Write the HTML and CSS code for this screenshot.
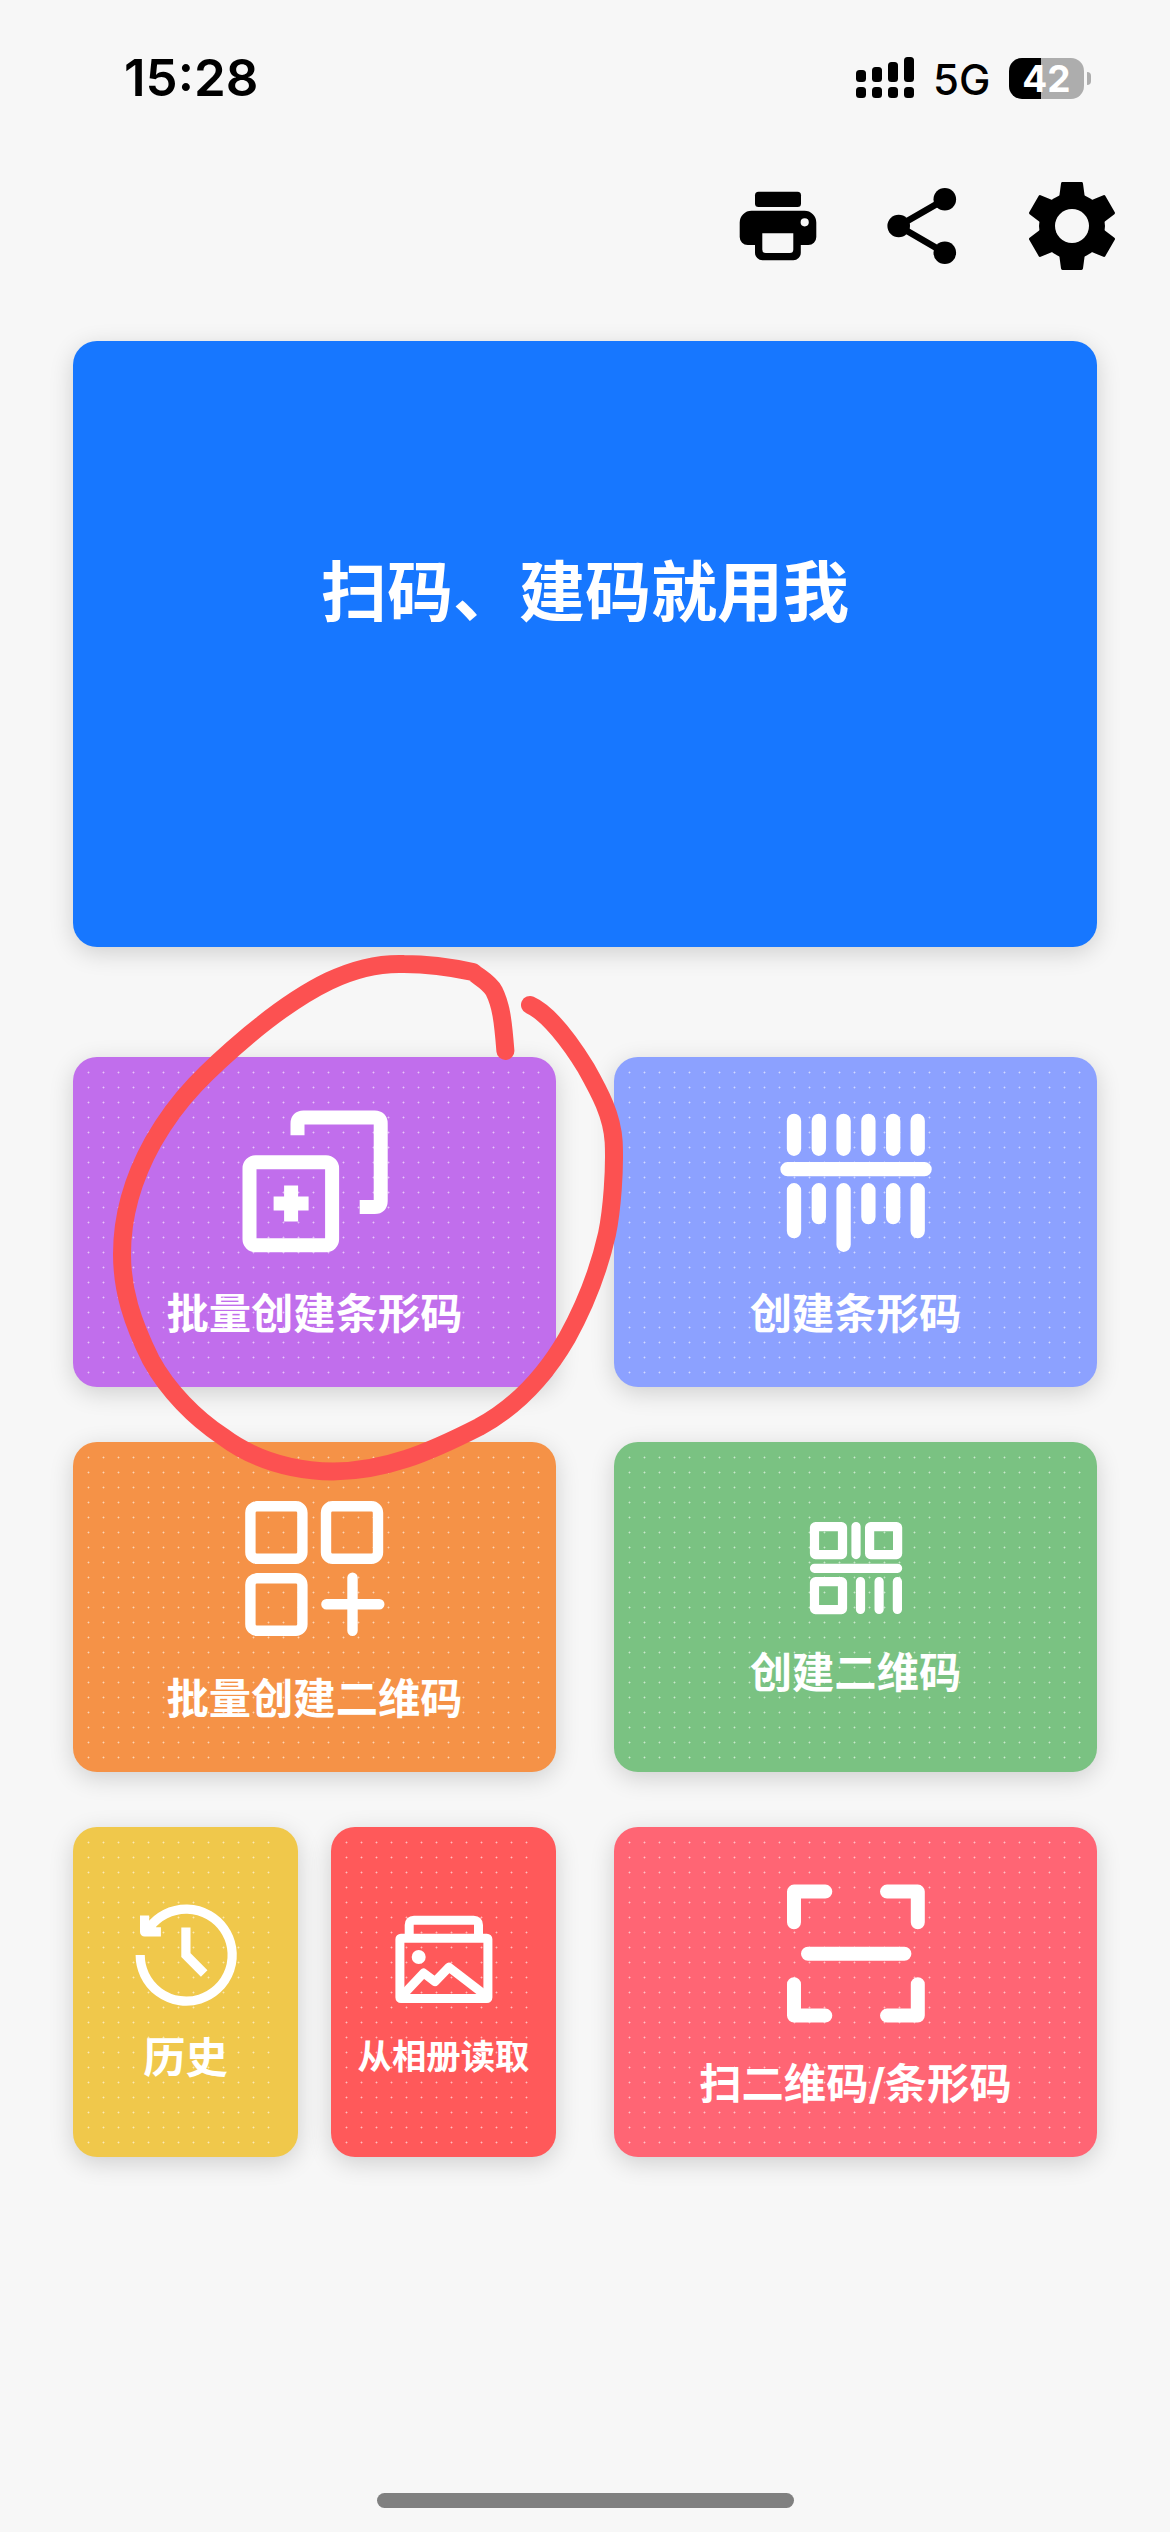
FILE: index.html
```html
<!DOCTYPE html>
<html lang="zh-CN">
<head>
<meta charset="utf-8">
<title>扫码、建码就用我</title>
<link rel="stylesheet" href="styles.css">
</head>
<body>
<div class="screen">
  <header class="status">
    <span class="status-time">15:28</span>
    <div class="status-right">
      <svg class="signal" width="58" height="42" viewBox="0 0 58 42">
        <rect x="0" y="13" width="10" height="12" rx="3.5"/><rect x="16" y="10" width="10" height="15" rx="3.5"/><rect x="32" y="5" width="10" height="20" rx="3.5"/><rect x="48" y="0" width="10" height="25" rx="3.5"/>
        <rect x="0" y="30" width="10" height="11" rx="3.5"/><rect x="16" y="30" width="10" height="11" rx="3.5"/><rect x="32" y="30" width="10" height="11" rx="3.5"/><rect x="48" y="30" width="10" height="11" rx="3.5"/>
      </svg>
      <span class="network">5G</span>
      <div class="battery"><span class="battery-level">42</span></div>
      <span class="battery-cap"></span>
    </div>
  </header>

  <nav class="toolbar">
    <svg width="90" height="90" viewBox="0 0 90 90">
      <rect x="22" y="10.7" width="46" height="15.2" rx="3.5"/>
      <path fill-rule="evenodd" d="M18.500 29.700H71.500A11.800 11.800 0 0 1 83.300 41.500V56A8 8 0 0 1 75.300 64H67.800V71.800A7.500 7.500 0 0 1 60.300 79.300H29.500A7.500 7.500 0 0 1 22 71.800V64H14.700A8 8 0 0 1 6.700 56V41.500A11.800 11.800 0 0 1 18.500 29.700ZM29.300 52.300V68.500Q29.300 72 32.800 72H56.800Q60.300 72 60.300 68.500V52.300ZM71.700 37.200A4.100 4.100 0 1 0 71.700 45.400A4.100 4.100 0 1 0 71.700 37.200Z"/>
    </svg>
    <svg class="share" width="90" height="90" viewBox="0 0 90 90">
      <circle cx="21.700" cy="45" r="11.300"/><circle cx="67.800" cy="18.300" r="11.300"/><circle cx="67.800" cy="71.800" r="11.300"/>
      <path d="M67.800 18.300L21.700 45L67.800 71.800" fill="none" stroke="#000" stroke-width="6.600"/>
    </svg>
    <svg class="gear" width="90" height="90" viewBox="0 0 90 90">
      <g stroke="#000" stroke-width="3" stroke-linejoin="round">
        <path id="tooth" d="M33.600 17L35.500 2.600H54.500L56.400 17V73L54.500 87.400H35.500L33.600 73Z"/>
        <use href="#tooth" transform="rotate(60 45 45)"/><use href="#tooth" transform="rotate(120 45 45)"/>
      </g>
      <circle cx="45" cy="45" r="33"/><circle cx="45" cy="45" r="17" fill="#f7f7f7"/>
    </svg>
  </nav>

  <main class="content">
    <section class="banner">扫码、建码就用我</section>

    <section class="grid">
      <a class="card purple">
        <svg class="icon" width="150" height="150" viewBox="0 0 150 150" stroke-width="14">
          <path d="M57.500 28.300V16.500Q57.500 10.500 63.500 10.500H134.700Q140.700 10.500 140.700 16.500V94Q140.700 100 134.700 100H119.700"/>
          <rect x="9.500" y="55.300" width="82.600" height="83" rx="6"/>
          <path d="M51.100 78.600V114.500M33.600 96.500H68.600"/>
        </svg>
        <span class="label">批量创建条形码</span>
      </a>
      <a class="card indigo">
        <svg class="icon round" width="160" height="150" viewBox="0 0 160 150" stroke-width="14.300">
          <path d="M18 13.900V41.800M42.800 13.900V41.800M67.600 13.900V41.800M92.400 13.900V41.800M117.200 13.900V41.800M141.700 13.900V41.800M11.500 62.200H148.600M18 83.200V124.100M42.800 83.200V110.100M67.600 83.200V137.800M92.400 83.200V110.100M117.200 83.200V110.100M141.700 83.200V124.100"/>
        </svg>
        <span class="label">创建条形码</span>
      </a>
      <a class="card orange">
        <svg class="icon round" width="150" height="150" viewBox="0 0 150 150" stroke-width="10.400">
          <rect x="10.400" y="14.300" width="52" height="52.500" rx="6.500"/><rect x="86" y="14.300" width="52" height="52.500" rx="6.500"/><rect x="10.400" y="86.300" width="52" height="52.500" rx="6.500"/>
          <path d="M112.500 85.700V138.800M86.400 112.300H139.300"/>
        </svg>
        <span class="label">批量创建二维码</span>
      </a>
      <a class="card green">
        <svg class="icon round" width="100" height="100" viewBox="0 0 100 100" stroke-width="9.200">
          <rect x="8.500" y="8.600" width="28" height="28" rx="1"/><rect x="63.600" y="8.600" width="28" height="28" rx="1"/><rect x="8.500" y="63.600" width="28" height="28" rx="1"/>
          <path d="M50 8.600V36.600M8.500 50.300H91.600M54.500 63.600V91.400M73.100 63.600V91.400M91.400 63.600V91.400"/>
        </svg>
        <span class="label">创建二维码</span>
      </a>
      <div class="pair">
        <a class="card small yellow">
          <svg class="icon" width="110" height="110" viewBox="0 0 110 110" stroke-width="9.200">
            <path d="M9.200 55A46 46 0 1 0 18.800 27"/>
            <path d="M13.600 15.500V31.900H29.900" stroke-linejoin="round"/>
            <path d="M17 29L22 24"/>
            <path d="M54.900 27.500V55L73.200 73.500"/>
          </svg>
          <span class="label">历史</span>
        </a>
        <a class="card small red">
          <svg class="icon" width="100" height="100" viewBox="0 0 100 100" stroke-width="9" stroke-linejoin="round">
            <rect x="5.900" y="30.200" width="88" height="60.300" rx="1"/>
            <path d="M15.200 28V17Q15.200 12.200 20 12.200H79.700Q84.500 12.200 84.500 17V28"/>
            <path d="M7.500 88.500L29.600 65L41 73.600L55 59.200L93 88.500"/>
            <circle cx="24.700" cy="49" r="7" fill="#fff" stroke="none"/>
          </svg>
          <span class="label label-sm">从相册读取</span>
        </a>
      </div>
      <a class="card pink">
        <svg class="icon round" width="150" height="150" viewBox="0 0 150 150" stroke-width="14">
          <path d="M13 45.300V14.600H44.300M106 14.600H136.800V45.300M13 107.300V138.600H44.300M106 138.600H136.800V107.300M27 76.700H123.400"/>
        </svg>
        <span class="label">扫二维码/条形码</span>
      </a>
    </section>
  </main>

  <div class="home-indicator"></div>

  <svg class="marker" width="1170" height="2532" viewBox="0 0 1170 2532">
    <path d="M505.400 1051C503 1020 501 1005 494 991C489 982 480 978 473 972C450 967 425 964 404 964C375 963 350 971 329 981C300 995 273 1015 249 1035C230 1051 212 1067 195 1085C177 1104 165 1121 153 1142C138 1169 122 1208 122 1254C122 1290 132 1322 151 1360C168 1391 195 1418 222 1436C258 1463 298 1471 333 1471.600C385 1471 428 1453 479 1427C516 1407 545 1376 567 1338C588 1300 600 1265 607 1234C612 1210 615 1170 613.700 1142C612 1115 600 1093 586 1068C570 1042 548 1013 530 1005"/>
  </svg>
</div>
</body>
</html>
```
FILE: styles.css
```css
* { box-sizing: border-box; }
body {
  margin: 0;
  background: #f7f7f7;
  font-family: Inter, "Noto Sans CJK SC", sans-serif;
  color: #000;
}
.screen {
  position: relative;
  width: 1170px;
  height: 2532px;
  display: flex;
  flex-direction: column;
  overflow: hidden;
}
svg { display: block; flex: none; }

.status {
  height: 156px;
  padding: 0 79px 0 124px;
  display: flex;
  align-items: center;
  justify-content: space-between;
}
.status-time { font-size: 51px; font-weight: 600; line-height: 60px; }
.status-right { display: flex; align-items: center; }
.network { margin-left: 19px; width: 56px; font-size: 42px; font-weight: 450; line-height: 50px; padding-top: 3px; }
.battery {
  margin-left: 20px;
  width: 75px;
  height: 41px;
  border-radius: 13px;
  background: linear-gradient(90deg, #000 32px, #adadad 32px);
  display: flex;
  align-items: center;
  justify-content: center;
}
.battery-level { color: #fff; font-size: 37px; font-weight: 700; line-height: 41px; }
.battery-cap {
  margin-left: 3px;
  width: 4px;
  height: 13px;
  border-radius: 0 4px 4px 0;
  background: #adadad;
}

.toolbar {
  height: 185px;
  padding: 25px 53px 0 0;
  display: flex;
  justify-content: flex-end;
}
.share { margin-left: 54px; }
.gear { margin-left: 60px; }

.content { padding: 0 73px; flex: 1; }
.banner {
  height: 606px;
  border-radius: 24px;
  background: #1777ff;
  box-shadow: 0 6px 24px rgba(0, 0, 0, .16);
  display: flex;
  justify-content: center;
  padding-top: 201px;
  color: #fff;
  font-size: 66px;
  font-weight: 700;
  line-height: 100px;
}
.grid {
  margin-top: 110px;
  display: grid;
  grid-template-columns: 483px 483px;
  gap: 55px 58px;
}
.card {
  position: relative;
  height: 330px;
  padding-top: 4px;
  border-radius: 24px;
  box-shadow: 0 6px 24px rgba(0, 0, 0, .16);
  display: flex;
  flex-direction: column;
  align-items: center;
  justify-content: center;
  gap: 30px;
}
/* dotted texture, 15px pitch */
.card::before {
  content: "";
  position: absolute;
  left: 8px;
  top: 8px;
  width: 465px;
  height: 315px;
  background: radial-gradient(circle at 7.5px 7.5px, rgba(255, 255, 255, .6) .7px, transparent 1.2px) 0 0 / 15px 15px;
}
.small::before { width: 195px; }
.pair { display: grid; grid-template-columns: 225px 225px; gap: 33px; }
.purple { background: #c16eec; }
.indigo { background: #8ca1ff; }
.orange { background: #f59247; }
.green { background: #7ac282; gap: 28px; }
.yellow { background: #f0c84b; gap: 21px; padding-top: 0; }
.red { background: #ff595a; gap: 22px; padding-top: 7px; }
.pink { background: #ff6574; }

.icon { position: relative; fill: none; stroke: #fff; }
.round { stroke-linecap: round; stroke-linejoin: round; }
.label {
  position: relative;
  color: #fff;
  font-size: 42.3px;
  font-weight: 700;
  line-height: 54px;
  white-space: nowrap;
}
.label-sm { font-size: 34.4px; }

.home-indicator {
  width: 417px;
  height: 15px;
  margin: 0 auto 24px;
  border-radius: 8px;
  background: #808080;
}
.marker { position: absolute; left: 0; top: 0; pointer-events: none; }
.marker path {
  fill: none;
  stroke: #fc5151;
  stroke-width: 18px;
  stroke-linecap: round;
  stroke-linejoin: round;
}
```
